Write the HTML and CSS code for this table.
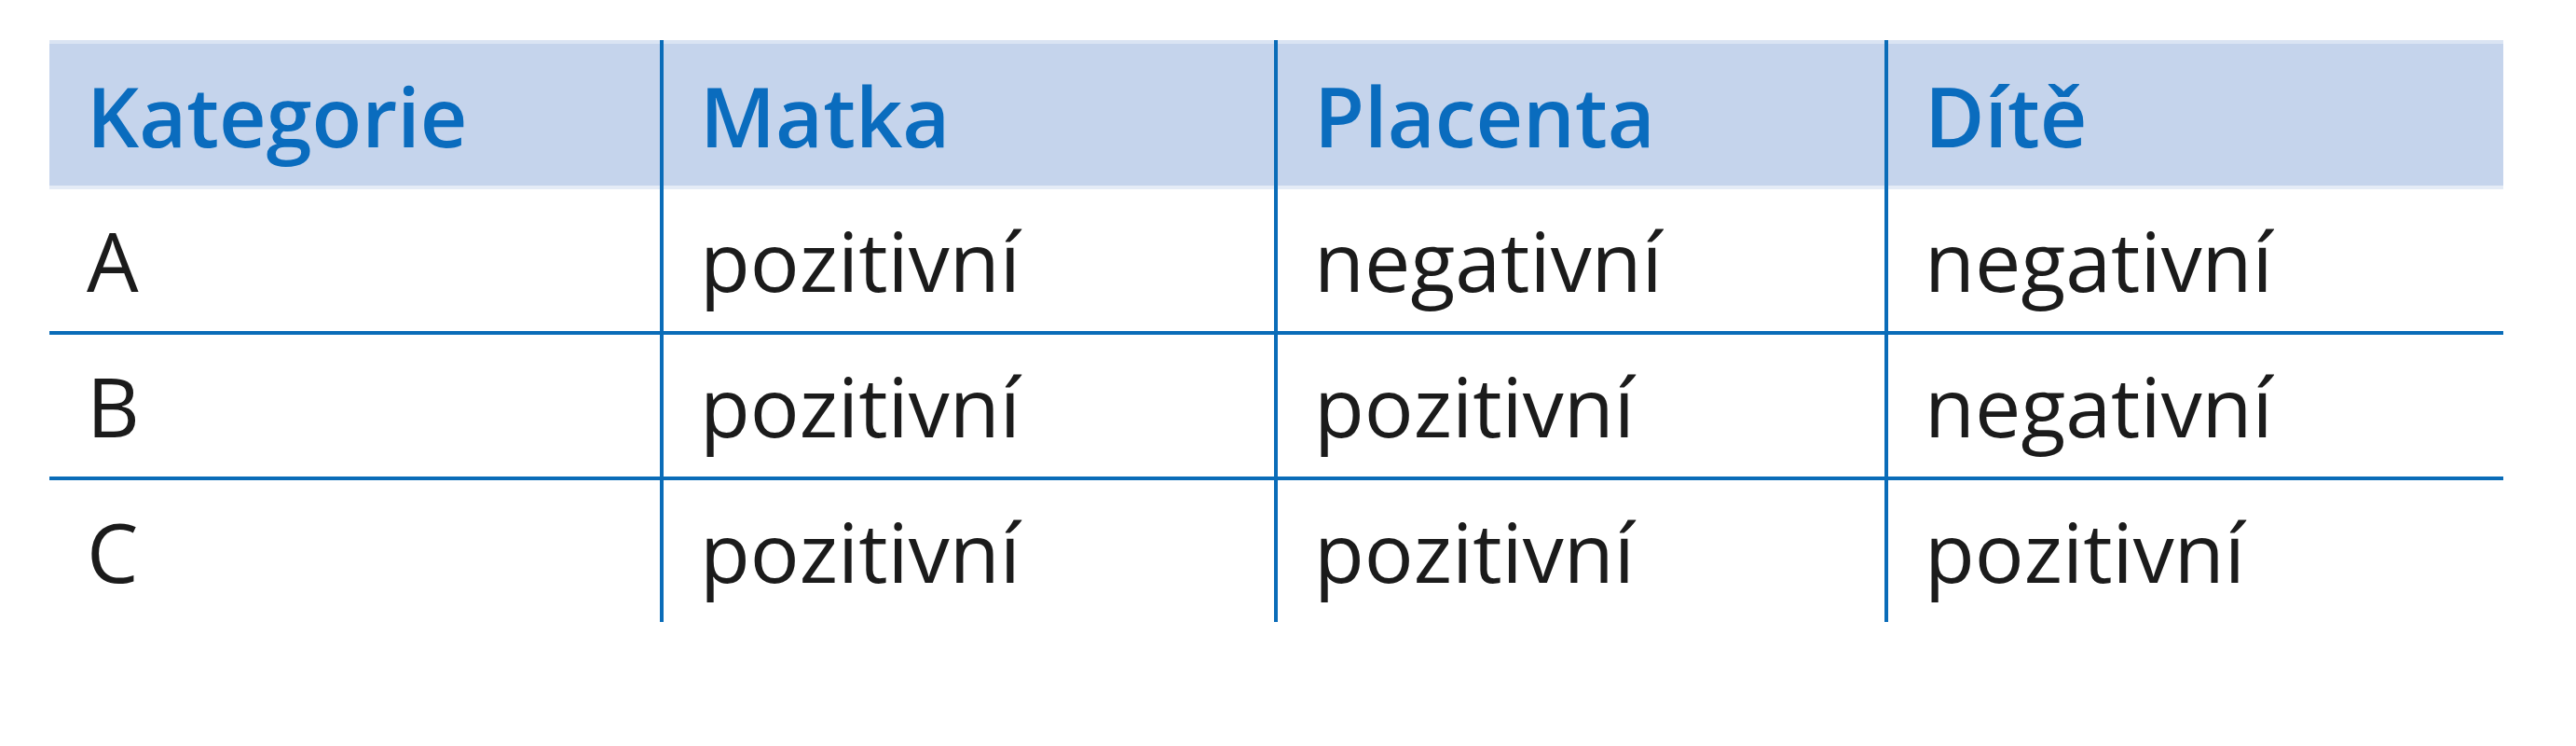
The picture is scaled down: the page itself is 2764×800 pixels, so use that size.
FILE: index.html
```html
<!DOCTYPE html>
<html lang="cs">
<head>
<meta charset="utf-8">
<title>Kategorie</title>
<link rel="stylesheet" href="styles.css">
</head>
<body>
<div class="page">
  <div class="grid" role="table">
    <div class="row head" role="row">
      <div class="cell" role="columnheader">Kategorie</div>
      <div class="cell" role="columnheader">Matka</div>
      <div class="cell" role="columnheader">Placenta</div>
      <div class="cell" role="columnheader">Dítě</div>
    </div>
    <div class="row body" role="row">
      <div class="cell" role="cell">A</div>
      <div class="cell" role="cell">pozitivní</div>
      <div class="cell" role="cell">negativní</div>
      <div class="cell" role="cell">negativní</div>
    </div>
    <div class="row body" role="row">
      <div class="cell" role="cell">B</div>
      <div class="cell" role="cell">pozitivní</div>
      <div class="cell" role="cell">pozitivní</div>
      <div class="cell" role="cell">negativní</div>
    </div>
    <div class="row body last" role="row">
      <div class="cell" role="cell">C</div>
      <div class="cell" role="cell">pozitivní</div>
      <div class="cell" role="cell">pozitivní</div>
      <div class="cell" role="cell">pozitivní</div>
    </div>
  </div>
</div>
</body>
</html>
```
FILE: styles.css
```css
html, body {
  margin: 0;
  padding: 0;
  background: #ffffff;
}

.page {
  padding: 43px 0 0 53px;
}

.grid {
  width: 2633px;
  font-family: "Open Sans", "Noto Sans", sans-serif;
  font-size: 88px;
}

.row {
  display: grid;
  grid-template-columns: 655px 659px 655px 664px;
}

.cell {
  white-space: nowrap;
  padding-left: 39px;
}

.cell:first-child {
  padding-left: 40px;
}

.cell + .cell {
  border-left: 4px solid #0a6cb8;
}

.head {
  background: #c5d4ec;
  color: #0a6cbe;
  font-weight: 600;
  box-shadow: inset 0 4px 0 #dae4f3, inset 0 -4px 0 #e4ebf6;
}

.head .cell {
  height: 157px;
  line-height: 157px;
  padding-top: 3px;
}

.body {
  color: #1b1b1b;
  font-weight: 400;
  border-bottom: 4px solid #0a6cb8;
}

.body .cell {
  height: 152px;
  line-height: 152px;
}

.body.last {
  border-bottom: none;
}
```
